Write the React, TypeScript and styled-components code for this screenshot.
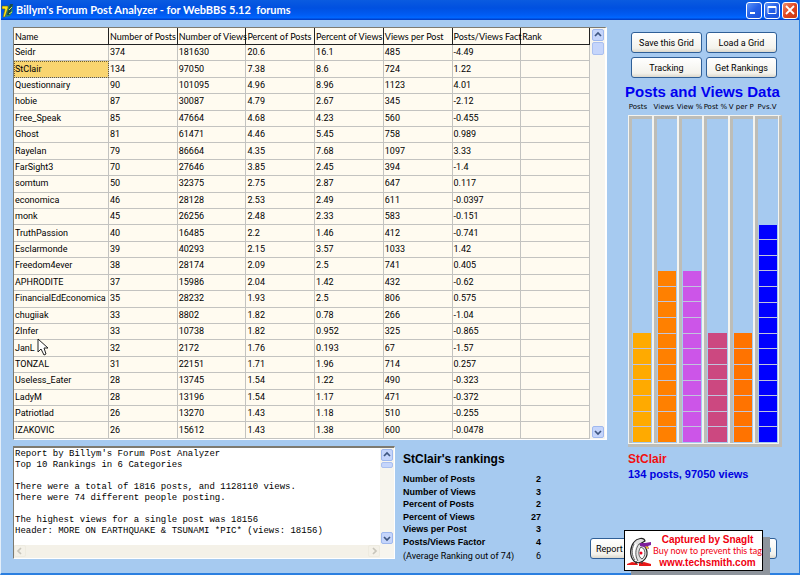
import React from 'react';
import styled, { createGlobalStyle } from 'styled-components';

const SANS = "'Liberation Sans', Arial, sans-serif";
const GRID = "Roboto, 'Liberation Sans', sans-serif";

const Global = createGlobalStyle`
  *, *::before, *::after { box-sizing: border-box; }
  body { margin: 0; background: #a6caf0; font-family: ${SANS}; color: #000; }
  button { font: inherit; color: inherit; margin: 0; padding: 0; }
`;

const Window = styled.div`
  min-height: 100vh;
  display: flex;
  flex-direction: column;
  background: #a6caf0;
  border-left: 1px solid #e4effa;
  border-right: 1px solid #2b7fe0;
  border-bottom: 2px solid #2b7fe0;
`;

const TitleBar = styled.header`
  height: 20px;
  flex: none;
  display: flex;
  align-items: center;
  gap: 3px;
  padding-right: 1px;
  background: linear-gradient(#0a5be0, #0050e0 40%, #005cf4 75%, #0066ff 88%, #0038c0);
  color: #fff;
`;

const Title = styled.h1`
  margin: 0;
  flex: 1;
  font: 700 11px/18px Lato, sans-serif;
  white-space: pre;
`;

const Caption = styled.button<{ $close?: boolean }>`
  width: 16px;
  height: 17px;
  margin-left: -1px;
  display: grid;
  place-items: center;
  border: 1px solid #fff;
  border-radius: 3px;
  background: ${p => (p.$close ? 'linear-gradient(135deg, #f09070, #e04420 50%, #c83810)' : 'linear-gradient(135deg, #5c94f8, #2560e8 50%, #1c50d8)')};
`;

const Body = styled.main`
  flex: 1;
  display: flex;
  gap: 16px;
  padding: 7px 16px 11px 12px;
`;

const Left = styled.div`
  flex: 1;
  min-width: 0;
  display: flex;
  flex-direction: column;
  gap: 6px;
`;

const GridFrame = styled.section`
  flex: 1;
  display: flex;
  border: 1px solid #fff;
  border-right-width: 2px;
  border-top-color: #7d7a70;
  border-left-color: #7d7a70;
  background: #fffbf0;
`;

const Table = styled.table`
  flex: 1;
  width: 100%;
  height: 411px;
  table-layout: fixed;
  border-collapse: separate;
  border-spacing: 0;
  font: 9px/11px ${GRID};
`;

const cell = `
  padding: 0 0 0 1px;
  text-align: left;
  font-weight: normal;
  white-space: nowrap;
`;

const Th = styled.th<{ $first?: boolean }>`
  ${cell}
  height: 17px;
  width: ${p => (p.$first ? '95px' : 'auto')};
  font-family: Lato, ${SANS};
  border-right: 1px solid #222;
  border-bottom: 1px solid #222;
`;

const Td = styled.td<{ $selected?: boolean }>`
  ${cell}
  border-right: 1px solid #c3c3c0;
  border-bottom: 1px solid #c3c3c0;
  background: ${p => (p.$selected ? '#f9d570' : 'transparent')};
  outline: ${p => (p.$selected ? '1px dotted #6b5d30' : 'none')};
  outline-offset: -1px;
`;

const ScrollV = styled.div<{ $corner?: boolean }>`
  width: ${p => (p.$corner ? 14 : 15)}px;
  flex: none;
  display: flex;
  flex-direction: column;
  align-items: center;
  gap: 1px;
  padding: 1px 1px ${p => (p.$corner ? 14 : 1)}px;
  background: #f7f5ee;
`;

const ScrollH = styled.div`
  height: 13px;
  flex: none;
  display: flex;
  justify-content: space-between;
  background: #f4f1e8;
`;

const Arrow = styled.button<{ $off?: boolean }>`
  width: 12px;
  height: 12px;
  flex: none;
  display: grid;
  place-items: center;
  border: 1px solid ${p => (p.$off ? '#eeebe0' : '#9fb8ee')};
  border-radius: 2px;
  background: ${p => (p.$off ? '#f4f1e8' : '#c5d5fb')};
  color: ${p => (p.$off ? '#c8c5bb' : '#3f5680')};
`;

const Thumb = styled.div<{ $h: number }>`
  width: 12px;
  height: ${p => p.$h}px;
  border: 1px solid #a9bff0;
  border-radius: 2px;
  background: #c5d5fb;
`;

const Spacer = styled.div`flex: 1;`;

const Lower = styled.div`
  display: flex;
  align-items: flex-start;
  gap: 8px;
`;

const ReportFrame = styled.section`
  width: 382px;
  height: 113px;
  display: flex;
  border: 1px solid #fff;
  border-top: 2px solid #7d7a70;
  border-left-color: #7d7a70;
  background: #fff;
`;

const ReportMain = styled.div`
  flex: 1;
  display: flex;
  flex-direction: column;
`;

const ReportText = styled.textarea`
  flex: 1;
  width: 100%;
  margin: 0;
  padding: 1px 0 0 1px;
  border: 0;
  outline: 0;
  resize: none;
  overflow: hidden;
  background: transparent;
  color: #000;
  white-space: pre;
  font: 9px/11px 'Liberation Mono', 'Courier New', monospace;
`;

const Rankings = styled.section`
  flex: 1;
  display: flex;
  flex-direction: column;
  padding-top: 5px;
`;

const RankTitle = styled.h2`
  margin: 0 0 6px;
  font: bold 12px/16px ${SANS};
`;

const RankTable = styled.table`
  width: 138px;
  height: 75px;
  border-spacing: 0;
  font: bold 9px/12px ${SANS};
  th, td { padding: 0; text-align: left; white-space: nowrap; }
  td { text-align: right; }
`;

const Average = styled.p`
  margin: 3px 0 0;
  width: 138px;
  display: flex;
  justify-content: space-between;
  white-space: nowrap;
  font: 9px/11px ${GRID};
`;

const Right = styled.aside`
  width: 160px;
  flex: none;
  display: flex;
  flex-direction: column;
  padding-top: 5px;
`;

const Buttons = styled.div`
  display: grid;
  grid-template-columns: 1fr 1fr;
  gap: 4px;
  padding: 0 6px 0 8px;
`;

const Push = styled.button<{ $w?: number; $right?: boolean }>`
  height: 21px;
  width: ${p => (p.$w ? `${p.$w}px` : 'auto')};
  border: 1px solid #2f5f97;
  border-radius: 3px;
  background: linear-gradient(#fff, #f3f2ec 80%, #dcd8cc);
  font: 9px/18px ${GRID};
  text-align: ${p => (p.$right ? 'right' : 'left')};
  padding: 0 5px;
  white-space: nowrap;
  ${Buttons} & { text-align: center; }
`;

const ChartTitle = styled.h2`
  margin: 5px 0 1px 2px;
  font: bold 15px/18px ${SANS};
  color: #0000f0;
  white-space: nowrap;
`;

const Labels = styled.div`
  display: grid;
  grid-template-columns: repeat(6, 1fr);
  width: 155px;
  margin-left: 2px;
  font: 7px/10px 'DejaVu Sans', sans-serif;
  text-align: center;
  white-space: nowrap;
`;

const Chart = styled.div`
  width: 154px;
  flex: 1;
  margin: 3px 0 5px 5px;
  display: grid;
  grid-template-columns: repeat(6, 1fr);
  border-right: 3px solid #bdbdb8;
  border-bottom: 3px solid #bdbdb8;
  border-top: 1px solid #f4f4f0;
`;

const Track = styled.div`
  display: flex;
  align-items: flex-end;
  border: 1px solid #f4f4f0;
  border-top: 0;
  box-shadow: inset 3px 3px 0 #bdbdb8;
  padding: 0 1px 1px 4px;
`;

const Bar = styled.div<{ $share: number }>`
  width: 100%;
  height: ${p => p.$share}%;
  display: flex;
  flex-direction: column;
  gap: 1px;
  background: #c0c4dc;
`;

const Segment = styled.span<{ $color: string }>`
  flex: 1;
  background: ${p => p.$color};
`;

const Selected = styled.div<{ $big?: boolean }>`
  margin-left: 5px;
  color: ${p => (p.$big ? '#f01010' : '#0000e0')};
  font: bold ${p => (p.$big ? 12 : 11)}px/15px ${SANS};
  white-space: nowrap;
`;

const Footer = styled.div`
  position: relative;
  height: 21px;
  margin: 56px 6px 3px -33px;
  display: flex;
  justify-content: space-between;
`;

const Stamp = styled.a`
  position: absolute;
  left: 34px;
  top: -8px;
  width: 139px;
  height: 41px;
  display: flex;
  align-items: center;
  border: 1px solid #000;
  background: #fff;
  box-shadow: 7px 7px 0 #8e949c;
  color: #f00010;
  text-decoration: none;
`;

const StampText = styled.span`
  flex: 1;
  display: flex;
  flex-direction: column;
  align-items: center;
  white-space: nowrap;
  font: bold 10px/11px ${SANS};
`;

const StampSmall = styled.span`font: 9px/12px Lato, ${SANS};`;

const Pointer = styled.svg`
  position: absolute;
  left: 37px;
  top: 338px;
`;

const heads = ['Name', 'Number of Posts', 'Number of Views', 'Percent of Posts', 'Percent of Views', 'Views per Post', 'Posts/Views Fact', 'Rank'];
const rows = `Seidr 374 181630 20.6 16.1 485 -4.49
StClair 134 97050 7.38 8.6 724 1.22
Questionnairy 90 101095 4.96 8.96 1123 4.01
hobie 87 30087 4.79 2.67 345 -2.12
Free_Speak 85 47664 4.68 4.23 560 -0.455
Ghost 81 61471 4.46 5.45 758 0.989
Rayelan 79 86664 4.35 7.68 1097 3.33
FarSight3 70 27646 3.85 2.45 394 -1.4
somtum 50 32375 2.75 2.87 647 0.117
economica 46 28128 2.53 2.49 611 -0.0397
monk 45 26256 2.48 2.33 583 -0.151
TruthPassion 40 16485 2.2 1.46 412 -0.741
Esclarmonde 39 40293 2.15 3.57 1033 1.42
Freedom4ever 38 28174 2.09 2.5 741 0.405
APHRODITE 37 15986 2.04 1.42 432 -0.62
FinancialEdEconomica 35 28232 1.93 2.5 806 0.575
chugiiak 33 8802 1.82 0.78 266 -1.04
2Infer 33 10738 1.82 0.952 325 -0.865
JanL 32 2172 1.76 0.193 67 -1.57
TONZAL 31 22151 1.71 1.96 714 0.257
Useless_Eater 28 13745 1.54 1.22 490 -0.323
LadyM 28 13196 1.54 1.17 471 -0.372
Patriotlad 26 13270 1.43 1.18 510 -0.255
IZAKOVIC 26 15612 1.43 1.38 600 -0.0478`.split('\n').map(r => [...r.split(' '), '']);

const report = `Report by Billym's Forum Post Analyzer
Top 10 Rankings in 6 Categories

There were a total of 1816 posts, and 1128110 views.
There were 74 different people posting.

The highest views for a single post was 18156
Header: MORE ON EARTHQUAKE & TSUNAMI *PIC* (views: 18156)`;

const ranks: [string, number][] = [
  ['Number of Posts', 2], ['Number of Views', 3], ['Percent of Posts', 2],
  ['Percent of Views', 27], ['Views per Post', 3], ['Posts/Views Factor', 4],
];

const SCALE = 21;
const bars = [
  { label: 'Posts', color: '#ffaa00', value: 7 },
  { label: 'Views', color: '#ff8000', value: 11 },
  { label: 'View %', color: '#cc55e8', value: 11 },
  { label: 'Post %', color: '#cc4880', value: 7 },
  { label: 'V per P', color: '#ff7300', value: 7 },
  { label: 'Pvs.V', color: '#0000ff', value: 14 },
];

const chevrons = { up: 'M1 5 4 2l3 3', down: 'M1 3l3 3 3-3', left: 'M5 1 2 4l3 3', right: 'M3 1l3 3-3 3' };

function ScrollArrow({ dir, off }: { dir: keyof typeof chevrons; off?: boolean }) {
  return (
    <Arrow type="button" $off={off} aria-label={`Scroll ${dir}`}>
      <svg width="8" height="8" fill="none" stroke="currentColor" strokeWidth="1.7"><path d={chevrons[dir]} /></svg>
    </Arrow>
  );
}

function AppIcon() {
  return (
    <svg width="12" height="17" viewBox="0 0 12 17">
      <path d="M8 3h4l-1 4 1 2-3 5-4 1 1-6z" fill="#2c8a68" />
      <path d="M9 2h3L9 13H6z" fill="#174a50" />
      <path d="M1 4h6v2L4 15H2l2-8H1z" fill="#ffe418" stroke="#5a5a10" strokeWidth=".6" />
      <path d="M8 8l3-3M8 12l3-2" stroke="#d8e840" />
    </svg>
  );
}

function StampLogo() {
  return (
    <svg width="28" height="36" viewBox="0 0 28 36">
      <path d="M9 28C4 23 5 14 9 9c3-4 10-5 11-1l-5 3c7 1 9 10 5 15-3 4-8 5-11 2z" fill="#e2e2e2" stroke="#222" strokeWidth="1.2" />
      <path d="M11 11c-3 5-3 12 0 17" fill="none" stroke="#fff" strokeWidth="2" />
      <path d="M9 11c-3 6-2 12 1 16M14 11c-4 5-4 12-1 17" fill="none" stroke="#666" />
      <path d="M16 14c5 2 5 9 1 12-4-2-4-9-1-12z" fill="#fff" stroke="#333" strokeWidth=".8" />
      <circle cx="16" cy="20" r="1.5" fill="#f00020" />
      <path d="M15 10h5l6-1v3l-3 1 1 3-5-2-4-1z" fill="#7d209b" />
      <path d="M20 13l4 1-2 2z" fill="#f5c820" />
      <path d="M2 31l5-2 5 1 1 2H2zM14 30l5-1 7 2v2H14z" fill="#e81818" />
      <path d="M11 28v3M17 28v3" stroke="#333" />
    </svg>
  );
}

export default function App() {
  return (
    <Window>
      <Global />
      <TitleBar>
        <AppIcon />
        <Title>{"Billym's Forum Post Analyzer - for WebBBS 5.12  forums"}</Title>
        <Caption type="button" aria-label="Minimize"><svg width="12" height="12"><path d="M2 9h5" stroke="#fff" strokeWidth="2" /></svg></Caption>
        <Caption type="button" aria-label="Maximize"><svg width="12" height="12"><path d="M2 2.5h8v7H2zM2 3.5h8" fill="none" stroke="#fff" /></svg></Caption>
        <Caption type="button" aria-label="Close" $close><svg width="12" height="12"><path d="M2 2l8 8M10 2l-8 8" stroke="#fff" strokeWidth="1.8" /></svg></Caption>
      </TitleBar>
      <Body>
        <Left>
          <GridFrame>
            <Table>
              <thead><tr>{heads.map((h, i) => <Th key={h} $first={i === 0} scope="col">{h}</Th>)}</tr></thead>
              <tbody>
                {rows.map(r => (
                  <tr key={r[0]}>{r.map((c, i) => <Td key={i} $selected={i === 0 && r[0] === 'StClair'}>{c}</Td>)}</tr>
                ))}
              </tbody>
            </Table>
            <ScrollV>
              <ScrollArrow dir="up" />
              <Thumb $h={13} />
              <Spacer />
              <ScrollArrow dir="down" />
            </ScrollV>
          </GridFrame>
          <Lower>
            <ReportFrame>
              <ReportMain>
                <ReportText aria-label="Report" readOnly value={report} />
                <ScrollH><ScrollArrow dir="left" off /><ScrollArrow dir="right" off /></ScrollH>
              </ReportMain>
              <ScrollV $corner>
                <ScrollArrow dir="up" />
                <Thumb $h={6} />
                <Spacer />
                <ScrollArrow dir="down" />
              </ScrollV>
            </ReportFrame>
            <Rankings>
              <RankTitle>StClair's rankings</RankTitle>
              <RankTable>
                <tbody>{ranks.map(([n, v]) => <tr key={n}><th scope="row">{n}</th><td>{v}</td></tr>)}</tbody>
              </RankTable>
              <Average><span>(Average Ranking out of 74)</span><span>6</span></Average>
            </Rankings>
          </Lower>
        </Left>
        <Right>
          <Buttons>
            {['Save this Grid', 'Load a Grid', 'Tracking', 'Get Rankings'].map(b => <Push key={b} type="button">{b}</Push>)}
          </Buttons>
          <ChartTitle>Posts and Views Data</ChartTitle>
          <Labels>{bars.map(b => <span key={b.label}>{b.label}</span>)}</Labels>
          <Chart>
            {bars.map(b => (
              <Track key={b.label}>
                <Bar $share={(b.value / SCALE) * 100}>
                  {Array.from({ length: b.value }, (_, i) => <Segment key={i} $color={b.color} />)}
                </Bar>
              </Track>
            ))}
          </Chart>
          <Selected $big>StClair</Selected>
          <Selected>134 posts, 97050 views</Selected>
          <Footer>
            <Push type="button" $w={60}>Report</Push>
            <Push type="button" $w={60} $right>n</Push>
            <Stamp href="#techsmith">
              <StampLogo />
              <StampText>
                <span>Captured by SnagIt</span>
                <StampSmall>Buy now to prevent this tag</StampSmall>
                <span>www.techsmith.com</span>
              </StampText>
            </Stamp>
          </Footer>
        </Right>
      </Body>
      <Pointer width="12" height="18" viewBox="0 0 12 18" aria-hidden="true">
        <path d="M1 1v13l3-3 3 6 2-1-2-6h4z" fill="#fff" stroke="#222" />
      </Pointer>
    </Window>
  );
}
